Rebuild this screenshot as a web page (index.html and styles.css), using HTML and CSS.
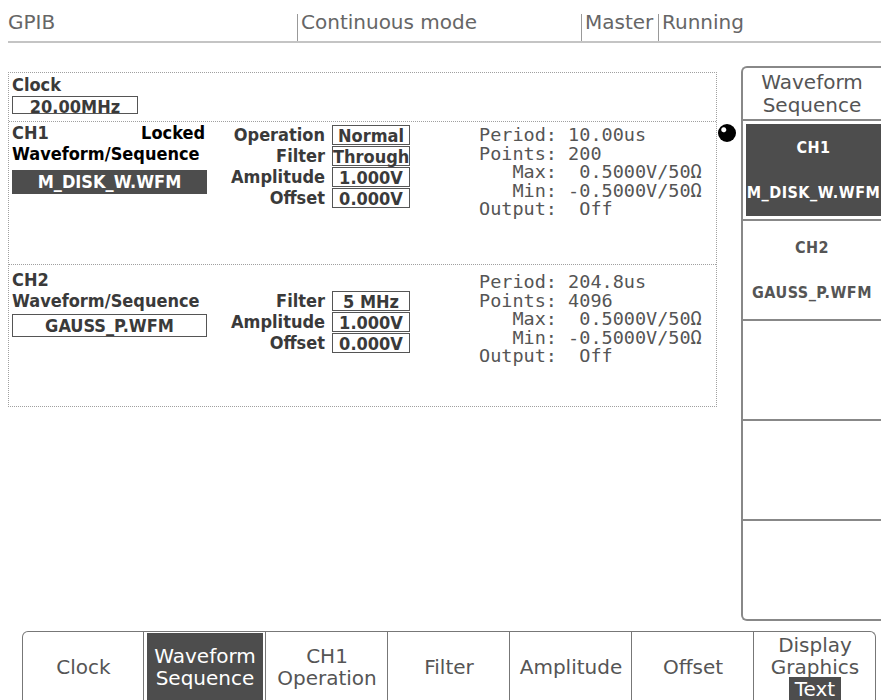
FILE: index.html
```html
<!DOCTYPE html>
<html lang="en">
<head>
    <meta charset="UTF-8">
    <meta name="viewport" content="width=device-width, initial-scale=1.0">
    <title>AWG Setup</title>
    <link rel="stylesheet" href="styles.css">
</head>
<body>
    <header class="status-bar">
        <div class="status-cell status-gpib">GPIB</div>
        <div class="status-cell status-mode">Continuous mode</div>
        <div class="status-cell status-role">Master</div>
        <div class="status-cell status-state">Running</div>
    </header>

    <div class="content">
        <div class="setup-panel">
            <section class="clock-section">
                <div class="label">Clock</div>
                <div class="value-box clock-box">20.00MHz</div>
            </section>

            <section class="channel channel-ch1">
                <div class="channel-name">
                    <div class="name-row"><span>CH1</span><span class="strong">Locked</span></div>
                    <div class="name-row strong">Waveform/Sequence</div>
                    <div class="file-box file-selected">M_DISK_W.WFM</div>
                </div>
                <div class="channel-controls">
                    <span class="ctrl-label">Operation</span><span class="value-box">Normal</span>
                    <span class="ctrl-label">Filter</span><span class="value-box">Through</span>
                    <span class="ctrl-label">Amplitude</span><span class="value-box">1.000V</span>
                    <span class="ctrl-label">Offset</span><span class="value-box">0.000V</span>
                </div>
<pre class="readout">Period: 10.00us
Points: 200
   Max:  0.5000V/50Ω
   Min: -0.5000V/50Ω
Output:  Off</pre>
            </section>

            <section class="channel channel-ch2">
                <div class="channel-name">
                    <div class="name-row"><span>CH2</span></div>
                    <div class="name-row">Waveform/Sequence</div>
                    <div class="file-box">GAUSS_P.WFM</div>
                </div>
                <div class="channel-controls">
                    <span class="ctrl-label"></span><span></span>
                    <span class="ctrl-label">Filter</span><span class="value-box">5 MHz</span>
                    <span class="ctrl-label">Amplitude</span><span class="value-box">1.000V</span>
                    <span class="ctrl-label">Offset</span><span class="value-box">0.000V</span>
                </div>
<pre class="readout">Period: 204.8us
Points: 4096
   Max:  0.5000V/50Ω
   Min: -0.5000V/50Ω
Output:  Off</pre>
            </section>
        </div>

        <div class="indicator"></div>

        <aside class="side-menu">
            <div class="side-title">Waveform<br>Sequence</div>
            <div class="side-item side-selected">
                <div class="side-body">
                    <div>CH1</div>
                    <div>M_DISK_W.WFM</div>
                </div>
            </div>
            <div class="side-item">
                <div class="side-body">
                    <div>CH2</div>
                    <div>GAUSS_P.WFM</div>
                </div>
            </div>
            <div class="side-item"></div>
            <div class="side-item"></div>
            <div class="side-item side-last"></div>
        </aside>
    </div>

    <nav class="bottom-menu">
        <div class="menu-btn menu-first"><div class="menu-body"><span>Clock</span></div></div>
        <div class="menu-btn menu-selected"><div class="menu-body"><span>Waveform<br>Sequence</span></div></div>
        <div class="menu-btn"><div class="menu-body"><span>CH1<br>Operation</span></div></div>
        <div class="menu-btn"><div class="menu-body"><span>Filter</span></div></div>
        <div class="menu-btn"><div class="menu-body"><span>Amplitude</span></div></div>
        <div class="menu-btn"><div class="menu-body"><span>Offset</span></div></div>
        <div class="menu-btn menu-last"><div class="menu-body"><span>Display<br>Graphics<br><span class="chosen">Text</span></span></div></div>
    </nav>
</body>
</html>
```

FILE: styles.css
```css
body {
    margin: 0;
    width: 881px;
    height: 700px;
    overflow: hidden;
    background-color: #fff;
    color: #555;
    font-family: "DejaVu Sans", sans-serif;
    font-size: 20px;
}

/* top status line */
.status-bar {
    display: flex;
    align-items: flex-end;
    height: 41px;
    margin-left: 8px;
    border-bottom: 2px solid #c4c4c4;
}
.status-cell {
    height: 27px;
    line-height: 17px;
    padding-left: 3px;
    border-left: 1px solid #999;
    color: #666;
    white-space: nowrap;
}
.status-gpib {
    width: 289px;
    padding-left: 0;
    border-left: none;
}
.status-mode {
    width: 280px;
}
.status-role {
    width: 73px;
}
.status-state {
    flex: 1;
}

.content {
    display: flex;
    position: relative;
    margin-top: 23px;
}

/* setup panel */
.setup-panel {
    align-self: flex-start;
    width: 707px;
    margin: 6px 0 0 8px;
    border: 1px dotted #a0a0a0;
    font-family: "DejaVu Sans Condensed", "DejaVu Sans", sans-serif;
    font-stretch: condensed;
    font-weight: bold;
    font-size: 18px;
    color: #3a3a3a;
}
.clock-section {
    height: 49px;
    padding: 2px 0 0 3px;
    box-sizing: border-box;
    border-bottom: 1px dotted #a0a0a0;
}
.clock-section .label {
    line-height: 20px;
}
.value-box {
    display: block;
    height: 20px;
    box-sizing: border-box;
    border: 1px solid #555;
    line-height: 19px;
    text-align: center;
    white-space: nowrap;
}
.clock-box {
    width: 126px;
    height: 18px;
    margin-top: 1px;
}
.channel {
    display: flex;
    padding-left: 3px;
    box-sizing: border-box;
}
.channel-ch1 {
    height: 143px;
    border-bottom: 1px dotted #a0a0a0;
}
.channel-ch2 {
    height: 141px;
    padding-top: 4px;
}
.channel-name {
    width: 195px;
}
.name-row {
    display: flex;
    justify-content: space-between;
    height: 21px;
    line-height: 21px;
    padding-right: 2px;
}
.strong {
    color: #000;
}
.file-box {
    height: 23px;
    margin-top: 3px;
    box-sizing: border-box;
    border: 1px solid #555;
    line-height: 22px;
    text-align: center;
}
.file-selected {
    height: 24px;
    margin-top: 6px;
    border: none;
    background-color: #4d4d4d;
    color: #fff;
    line-height: 24px;
}
.channel-controls {
    display: grid;
    grid-template-columns: 118px 78px;
    grid-auto-rows: 20px;
    column-gap: 7px;
    row-gap: 1px;
    align-content: start;
    margin-top: 3px;
}
.channel-ch2 .channel-controls {
    margin-top: 1px;
}
.ctrl-label {
    line-height: 20px;
    text-align: right;
}
.readout {
    margin: 0 0 0 69px;
    padding-top: 4px;
    font-family: "DejaVu Sans Mono", monospace;
    font-weight: normal;
    font-stretch: normal;
    font-size: 18.5px;
    line-height: 18.5px;
    color: #555;
}

/* selection dot */
.indicator {
    position: absolute;
    left: 718px;
    top: 58px;
    width: 18px;
    height: 18px;
    border-radius: 50%;
    background: radial-gradient(circle at 32% 32%, #fff 0 2px, #000 3px);
}

/* side menu */
.side-menu {
    display: flex;
    flex-direction: column;
    flex: 1;
    height: 555px;
    margin-left: 24px;
    box-sizing: border-box;
    border: 2px solid #888;
    border-right: none;
    border-radius: 6px 0 0 6px;
}
.side-title {
    height: 53px;
    padding-top: 3px;
    box-sizing: border-box;
    border-bottom: 2px solid #888;
    line-height: 23px;
    text-align: center;
}
.side-item {
    height: 100px;
    flex-shrink: 0;
    box-sizing: border-box;
    border-bottom: 2px solid #888;
    overflow: hidden;
}
.side-last {
    flex: 1;
    border-bottom: none;
}
.side-body {
    display: flex;
    flex-direction: column;
    gap: 23px;
    height: 100%;
    padding-top: 16px;
    box-sizing: border-box;
    font-family: "DejaVu Sans Condensed", "DejaVu Sans", sans-serif;
    font-stretch: condensed;
    font-weight: bold;
    font-size: 16px;
    letter-spacing: 0.5px;
    line-height: 22px;
    text-align: center;
    white-space: nowrap;
}
.side-selected {
    padding: 3px 0 3px 3px;
}
.side-selected .side-body {
    padding-top: 13px;
    background-color: #4d4d4d;
    color: #fff;
}

/* bottom soft keys */
.bottom-menu {
    display: flex;
    height: 69px;
    margin: 10px 0 0 22px;
}
.menu-btn {
    width: 122px;
    padding: 1px 2px 0 3px;
    box-sizing: border-box;
    border-top: 1px solid #777;
    border-right: 1px solid #777;
}
.menu-first {
    border-left: 1px solid #777;
    border-top-left-radius: 6px;
}
.menu-last {
    border-top-right-radius: 6px;
}
.menu-body {
    display: flex;
    align-items: center;
    justify-content: center;
    height: 100%;
    line-height: 22px;
    text-align: center;
}
.menu-selected .menu-body {
    background-color: #4d4d4d;
    color: #fff;
}
.chosen {
    padding: 0 6px;
    background-color: #4d4d4d;
    color: #fff;
}
```
